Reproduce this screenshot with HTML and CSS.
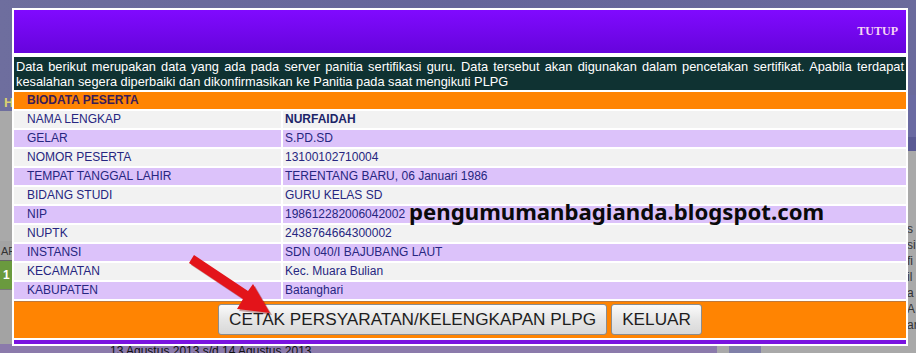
FILE: index.html
```html
<!DOCTYPE html>
<html>
<head>
<meta charset="utf-8">
<link rel="stylesheet" href="styles.css">
</head>
<body>
<div class="page">
  <div class="page-top"></div>
  <div class="page-mid">
    <div class="side-left">
      <div class="sl-h">H</div>
      <div class="sl-gap"></div>
      <div class="sl-af">AF</div>
      <div class="sl-green">1</div>
      <div class="sl-rest"></div>
    </div>
    <div class="side-right">
      <div class="sr-blue"></div>
      <div class="sr-dark"></div>
      <div class="sr-text">s<br>si<br>fi<br>il<br>a<br>A<br>ar</div>
    </div>
  </div>
  <div class="page-bottom">
    <div class="pb-purple"><span>13 Agustus 2013 s/d 14 Agustus 2013</span></div>
    <div class="pb-box"></div>
  </div>
</div>

<div class="modal">
  <div class="modal-head"><span class="close">TUTUP</span></div>
  <div class="notice">Data berikut merupakan data yang ada pada server panitia sertifikasi guru. Data tersebut akan digunakan dalam pencetakan sertifikat. Apabila terdapat kesalahan segera diperbaiki dan dikonfirmasikan ke Panitia pada saat mengikuti PLPG</div>
  <div class="bio">
    <div class="bio-title">BIODATA PESERTA</div>
    <div class="k odd">NAMA LENGKAP</div><div class="v odd strong">NURFAIDAH</div>
    <div class="k even">GELAR</div><div class="v even">S.PD.SD</div>
    <div class="k odd">NOMOR PESERTA</div><div class="v odd">13100102710004</div>
    <div class="k even">TEMPAT TANGGAL LAHIR</div><div class="v even">TERENTANG BARU, 06 Januari 1986</div>
    <div class="k odd">BIDANG STUDI</div><div class="v odd">GURU KELAS SD</div>
    <div class="k even">NIP</div><div class="v even">198612282006042002</div>
    <div class="k odd">NUPTK</div><div class="v odd">2438764664300002</div>
    <div class="k even">INSTANSI</div><div class="v even">SDN 040/I BAJUBANG LAUT</div>
    <div class="k odd">KECAMATAN</div><div class="v odd">Kec. Muara Bulian</div>
    <div class="k even">KABUPATEN</div><div class="v even">Batanghari</div>
  </div>
  <div class="actions">
    <button class="btn">CETAK PERSYARATAN/KELENGKAPAN PLPG</button>
    <button class="btn">KELUAR</button>
  </div>
  <div class="bottom-line"></div>
</div>

<div class="watermark">pengumumanbagianda.blogspot.com</div>

<svg class="arrow" width="100" height="72" viewBox="0 0 100 72">
  <polygon points="9,13 14,5 68,41 73,34 90,63 57,59 63,49" fill="#7a0000" opacity="0.35" transform="translate(2,2)"/>
  <polygon points="9,13 14,5 68,41 73,34 90,63 57,59 63,49" fill="#e3141a"/>
</svg>
</body>
</html>
```

FILE: styles.css
```css
* { box-sizing: border-box; }

html, body {
  margin: 0;
  padding: 0;
}

body {
  width: 916px;
  height: 353px;
  overflow: hidden;
  position: relative;
  font-family: "Liberation Sans", Arial, sans-serif;
}

.page {
  display: flex;
  flex-direction: column;
  height: 353px;
}

.page-top {
  height: 95px;
  background: linear-gradient(90deg, #6e6e9e, #65659a 50%, #6a6a9c);
}

.page-mid {
  flex: 1;
  display: flex;
  justify-content: space-between;
  background: #a6a6a6;
}

.side-left {
  width: 14px;
  display: flex;
  flex-direction: column;
  background: #a3a3a3;
}

.sl-h {
  height: 16px;
  background: #6e6e9e;
  color: #d8d070;
  font-size: 13px;
  font-weight: bold;
  padding-left: 4px;
  line-height: 16px;
}

.sl-gap {
  height: 130px;
  background: #a9a9a9;
}

.sl-af {
  height: 20px;
  font-size: 11px;
  line-height: 20px;
  color: #333;
  padding-left: 1px;
  border-bottom: 1px solid #666;
}

.sl-green {
  height: 28px;
  background: #6a9a3e;
  color: #fff;
  font-weight: bold;
  font-size: 12px;
  line-height: 28px;
  padding-left: 3px;
}

.sl-rest {
  flex: 1;
  background: #a3a3a3;
  border-top: 1px solid #777;
}

.side-right {
  width: 10px;
  display: flex;
  flex-direction: column;
}

.sr-blue {
  height: 42px;
  background: #6a6aa2;
}

.sr-dark {
  height: 14px;
  background: #5a5a94;
}

.sr-text {
  flex: 1;
  background: #a9a9a9;
  color: #333;
  font-size: 12px;
  line-height: 16px;
  padding-top: 70px;
  padding-left: 1px;
}

.page-bottom {
  height: 9px;
  display: flex;
  background: #a9a9a9;
}

.pb-purple {
  width: 717px;
  background: #8b7aab;
  overflow: hidden;
  padding-left: 110px;
  font-size: 12px;
  line-height: 14px;
  color: #111;
}

.pb-box {
  width: 32px;
  margin-left: 12px;
  background: #8080a8;
}

/* Modal */
.modal {
  position: absolute;
  left: 12px;
  top: 8px;
  width: 896px;
  height: 338px;
  background: #fff;
  padding: 2px;
  display: flex;
  flex-direction: column;
}

.modal-head {
  height: 43px;
  background: linear-gradient(#800aff, #6604dc);
  display: flex;
  align-items: center;
  justify-content: flex-end;
  padding-right: 8px;
}

.close {
  font-family: "Liberation Serif", "Times New Roman", serif;
  font-weight: bold;
  font-size: 12px;
  color: #f6d4f4;
}

.notice {
  margin-top: 4px;
  height: 33px;
  background: #0f3232;
  color: #fff;
  font-size: 12.8px;
  line-height: 15px;
  padding: 2px 2px 0 2px;
  text-align: justify;
}

.bio {
  margin-top: 2px;
  display: grid;
  grid-template-columns: 267px 1fr;
  grid-auto-rows: 17px;
  gap: 2px;
  font-size: 12px;
  line-height: 17px;
  color: #262680;
}

.bio-title {
  grid-column: 1 / span 2;
  background: #ff8402;
  color: #3a1c58;
  font-weight: bold;
  padding-left: 13px;
}

.k {
  padding-left: 13px;
}

.v {
  padding-left: 2px;
}

.odd { background: #f2f2f2; }
.even { background: #dcc2fa; }

.strong {
  font-weight: bold;
  color: #1c2468;
}

.actions {
  margin-top: 2px;
  height: 37px;
  background: #ff8402;
  box-shadow: inset 0 1px 0 #c07838;
  display: flex;
  justify-content: center;
  align-items: center;
  gap: 4px;
}

.btn {
  height: 31px;
  padding: 0 10px;
  font-family: "Liberation Sans", Arial, sans-serif;
  font-size: 17.2px;
  color: #1e1e1e;
  background: linear-gradient(#fbfbfb, #e6e6e6 50%, #d8d8d8);
  border: 1px solid #8c8c8c;
  border-radius: 3px;
}

.bottom-line {
  margin-top: 2px;
  height: 4px;
  background: #7a14e0;
}

.watermark {
  position: absolute;
  left: 409px;
  top: 196px;
  font-family: "Noto Sans", "Open Sans", sans-serif;
  font-weight: bold;
  font-size: 22.2px;
  color: #0a0a0a;
}

.arrow {
  position: absolute;
  left: 180px;
  top: 250px;
}
```
